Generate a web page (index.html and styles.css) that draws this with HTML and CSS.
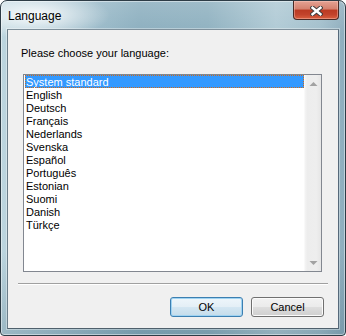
FILE: index.html
```html
<!DOCTYPE html>
<html>
<head>
<meta charset="utf-8">
<link rel="stylesheet" href="styles.css">
</head>
<body>
<div class="window">
  <div class="titlebar">
    <span class="title">Language</span>
    <div class="close">
      <svg width="13" height="10" viewBox="0 0 13 10">
        <path d="M2.5 1.8 L10.5 8.2 M10.5 1.8 L2.5 8.2" stroke="#3b3b3b" stroke-width="4.4" stroke-linecap="square" fill="none"/>
        <path d="M2.5 1.8 L10.5 8.2 M10.5 1.8 L2.5 8.2" stroke="#ffffff" stroke-width="2.4" stroke-linecap="square" fill="none"/>
      </svg>
    </div>
  </div>
  <div class="client">
    <div class="label">Please choose your language:</div>
    <div class="listbox">
      <ul class="items">
        <li class="item selected">System standard</li>
        <li class="item">English</li>
        <li class="item">Deutsch</li>
        <li class="item">Français</li>
        <li class="item">Nederlands</li>
        <li class="item">Svenska</li>
        <li class="item">Español</li>
        <li class="item">Português</li>
        <li class="item">Estonian</li>
        <li class="item">Suomi</li>
        <li class="item">Danish</li>
        <li class="item">Türkçe</li>
      </ul>
      <div class="scrollbar">
        <div class="sb-btn">
          <svg width="17" height="17" viewBox="0 0 17 17"><polygon points="5.5,11 9.5,7 13.5,11" fill="#a2a2a2"/></svg>
        </div>
        <div class="sb-track"></div>
        <div class="sb-btn">
          <svg width="17" height="17" viewBox="0 0 17 17"><polygon points="5.5,7 9.5,11 13.5,7" fill="#a2a2a2"/></svg>
        </div>
      </div>
    </div>
    <div class="sep"></div>
    <div class="buttons">
      <div class="btn default">OK</div>
      <div class="btn">Cancel</div>
    </div>
  </div>
</div>
</body>
</html>
```

FILE: styles.css
```css
* { box-sizing: border-box; }
html, body { margin: 0; padding: 0; }
body {
  width: 346px;
  height: 336px;
  overflow: hidden;
  background: #ffffff;
  font-family: "Liberation Sans", Arial, sans-serif;
  font-size: 11px;
  color: #000;
}
.window {
  width: 346px;
  height: 336px;
  border: 1px solid #2d3c46;
  border-radius: 7px 7px 4px 4px;
  box-shadow: inset 0 0 0 1px rgba(255,255,255,0.45);
  background:
    radial-gradient(ellipse 75px 24px at 34px 14px, rgba(255,255,255,0.9), rgba(255,255,255,0) 100%),
    linear-gradient(to bottom, rgba(255,255,255,0.15) 0%, rgba(255,255,255,0) 10%, rgba(0,0,0,0) 75%, rgba(40,80,100,0.22) 100%),
    linear-gradient(to right, #bcd5df 0%, #a9c6d3 15%, #8cafbf 40%, #8fb1c0 60%, #b0cad5 80%, #a2bfcc 93%, #8eadbd 100%);
  display: flex;
  flex-direction: column;
  padding: 0 6px 6px 6px;
}
.titlebar {
  height: 28px;
  display: flex;
  justify-content: space-between;
  align-items: flex-start;
  margin: 0 0 0 1px;
}
.title {
  font-size: 12px;
  line-height: 14px;
  margin-top: 8px;
  color: #000;
}
.close {
  width: 46px;
  height: 19px;
  border: 1px solid #4a2a25;
  border-top: none;
  border-radius: 0 0 4px 4px;
  background:
    linear-gradient(to bottom, #e4a293 0%, #d4806e 45%, #bb3a22 50%, #c2432b 75%, #d9603f 100%);
  box-shadow: inset 0 0 0 1px rgba(255,210,200,0.4);
  display: flex;
  align-items: center;
  justify-content: center;
  padding-top: 1px;
}
.client {
  width: 332px;
  height: 300px;
  background: #f0f0f0;
  border: 1px solid;
  border-color: #7f909b #56697a #4f606c #6a7d89;
  box-shadow: 0 0 0 1px rgba(255,255,255,0.35);
  padding: 17px 16px 0 15px;
  display: flex;
  flex-direction: column;
}
.label {
  line-height: 13px;
  margin-left: -2px;
}
.listbox {
  margin-top: 14px;
  width: 299px;
  height: 198px;
  border: 1px solid #828790;
  background: #ffffff;
  display: flex;
}
.items {
  list-style: none;
  margin: 0;
  padding: 0;
  flex: 1;
}
.item {
  height: 13px;
  padding: 2px 0 0 1px;
  line-height: 11px;
  margin: 0 0 0 1px;
  white-space: nowrap;
}
.item.selected {
  background: #3399ff;
  color: #ffffff;
  outline: 1px dotted #cc6a1e;
  outline-offset: -1px;
}
.scrollbar {
  width: 17px;
  display: flex;
  flex-direction: column;
  background: linear-gradient(to right, #f4f4f4 0%, #ededed 15%, #eeeeee 70%, #e6e6e6 100%);
  border-left: 1px solid #f9f9f9;
}
.sb-btn {
  height: 17px;
  display: flex;
  margin-left: -1px;
}
.sb-track { flex: 1; }
.sep {
  margin: 11px -6px 0 -5px;
  height: 2px;
  border-top: 1px solid #a0a0a0;
  border-bottom: 1px solid #ffffff;
}
.buttons {
  margin: 12px -2px 0 0;
  display: flex;
  justify-content: flex-end;
  gap: 8px;
}
.btn {
  width: 73px;
  height: 20px;
  border: 1px solid #707070;
  border-radius: 3px;
  background: linear-gradient(to bottom, #f2f2f2 0%, #ebebeb 48%, #dddddd 52%, #cfcfcf 100%);
  box-shadow: inset 0 0 0 1px #fbfbfb;
  display: flex;
  align-items: center;
  justify-content: center;
  line-height: 13px;
}
.btn.default {
  border-color: #3c7fb1;
  background: linear-gradient(to bottom, #eef6fb 0%, #e4eff6 48%, #d3e6f2 52%, #c5dcea 100%);
  box-shadow: inset 0 0 0 1px #9fd3f2;
}
```
